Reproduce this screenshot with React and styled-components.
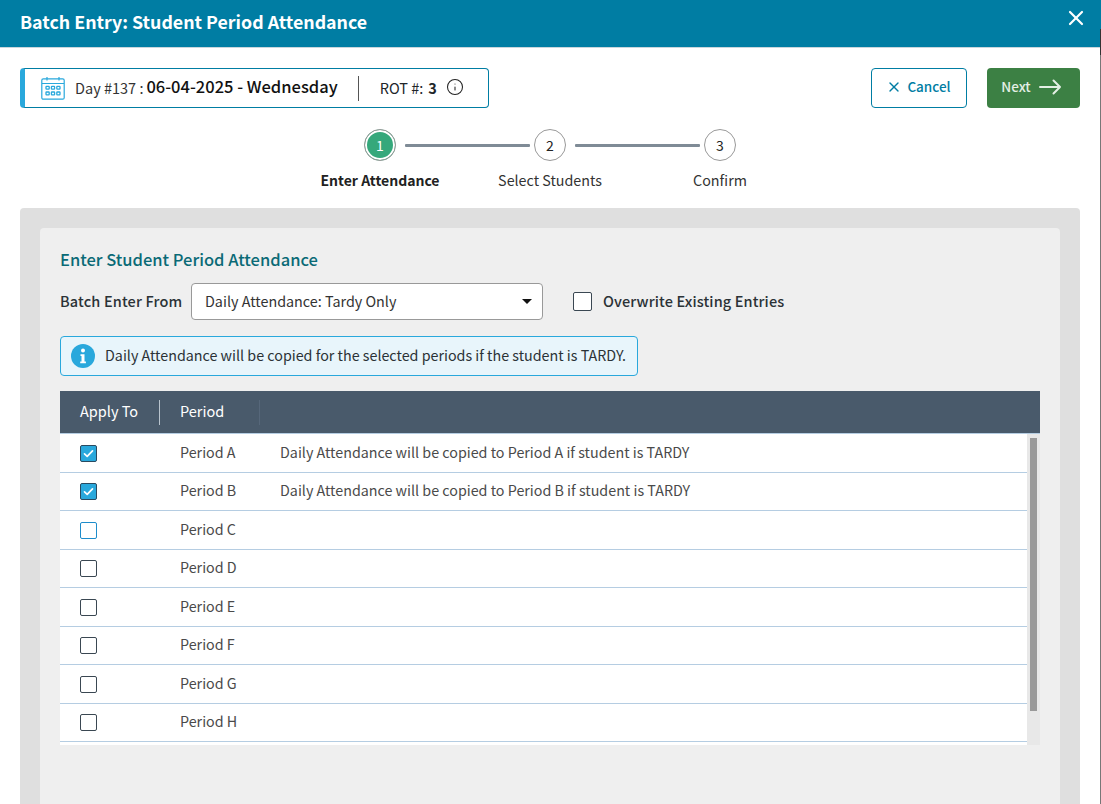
import React from 'react';
import styled, { createGlobalStyle } from 'styled-components';
import { X, Info } from 'lucide-react';

const GlobalStyle = createGlobalStyle`
  html, body {
    margin: 0;
    padding: 0;
    height: 100%;
    overflow: hidden;
    background: #fff;
    font-family: "Noto Sans CJK SC", "Noto Sans", sans-serif;
    color: #212529;
  }
  * { box-sizing: border-box; }
`;

const Modal = styled.div`
  position: relative;
  height: 804px;
  overflow: hidden;
`;

const EdgeLine = styled.div`
  position: absolute;
  top: 29px;
  right: 0;
  bottom: 0;
  width: 1px;
  background: linear-gradient(#333 0, #333 26px, #777 26px);
`;

const Header = styled.header`
  height: 48px;
  background: #007da3;
  border-bottom: 1px solid #c9d6dc;
  padding: 0 13px 3px 20px;
  display: flex;
  align-items: center;
  justify-content: space-between;
`;

const Title = styled.h1`
  margin: 0;
  padding-bottom: 2px;
  font-size: 17.8px;
  font-weight: 700;
  color: #fff;
`;

const CloseButton = styled.button`
  border: 0;
  padding: 0;
  background: none;
  color: #fff;
  display: flex;
  margin-bottom: 9px;
`;

const Body = styled.main`
  padding: 20px 21px 0 20px;
`;

const TopRow = styled.div`
  display: flex;
  align-items: center;
  justify-content: space-between;
`;

const DayBox = styled.div`
  width: 469px;
  height: 40px;
  border: 1px solid #007da3;
  border-left: 5px solid #29a8dc;
  border-radius: 4px;
  padding: 0 0 2px 16px;
  display: flex;
  align-items: center;
  font-size: 14.5px;
`;

const CalendarSvg = styled.svg`
  margin-top: 2px;
`;

const DayLabel = styled.span`
  margin-left: 10px;
  color: #333;
`;

const DayValue = styled.span`
  margin: 0 0 2px 3px;
  font-size: 16.5px;
  font-weight: 500;
  color: #111;
`;

const DayDivider = styled.span`
  width: 1px;
  height: 25px;
  background: #555;
  margin: 2px 21px 0 20px;
`;

const RotValue = styled.b`
  margin: 0 9px 0 5px;
  font-weight: 700;
`;

const Actions = styled.div`
  display: flex;
  gap: 20px;
`;

const CancelButton = styled.button`
  width: 96px;
  height: 40px;
  border: 1px solid #007da3;
  border-radius: 4px;
  background: #fff;
  color: #007da3;
  padding: 0 1px 2px 0;
  font: 500 13.5px "Noto Sans CJK SC", sans-serif;
  display: flex;
  align-items: center;
  justify-content: center;
  gap: 5px;
`;

const NextButton = styled.button`
  width: 93px;
  height: 40px;
  border: 0;
  border-radius: 4px;
  background: #3c8044;
  color: #e4efe5;
  padding: 0 4px 2px 0;
  font: 500 13.5px "Noto Sans CJK SC", sans-serif;
  display: flex;
  align-items: center;
  justify-content: center;
  gap: 8px;
`;

const ButtonLabel = styled.span`
  padding-bottom: 2px;
`;

const Stepper = styled.ol`
  list-style: none;
  margin: 21px 0 0;
  padding: 0 0 0 275px;
  display: flex;
`;

const Step = styled.li`
  width: 170px;
  display: flex;
  flex-direction: column;
  align-items: center;
  position: relative;
`;

const StepCircle = styled.span`
  width: 32px;
  height: 32px;
  border-radius: 50%;
  border: 1px solid #999;
  background: ${p => (p.$active ? '#35a87b' : '#fff')};
  box-shadow: ${p => (p.$active ? 'inset 0 0 0 2px #fff' : 'none')};
  color: ${p => (p.$active ? '#fff' : '#222')};
  font-size: 14px;
  display: flex;
  align-items: center;
  justify-content: center;
`;

const StepLine = styled.span`
  position: absolute;
  left: 110px;
  top: 15px;
  width: 125px;
  height: 3px;
  background: #7f8b96;
  border-radius: 1px;
`;

const StepLabel = styled.span`
  margin-top: 9px;
  font-size: ${p => (p.$active ? '14px' : '14.3px')};
  line-height: 20px;
  font-weight: ${p => (p.$active ? 700 : 400)};
  color: ${p => (p.$active ? '#222' : '#333')};
`;

const OuterPanel = styled.section`
  margin-top: 18px;
  height: 620px;
  background: #dfdfdf;
  border-radius: 4px 4px 0 0;
  padding: 20px;
`;

const InnerPanel = styled.div`
  height: 600px;
  background: #efefef;
  border-radius: 4px 4px 0 0;
  padding: 19px 20px 20px;
`;

const SectionTitle = styled.h2`
  margin: 0;
  font-size: 16.5px;
  line-height: 24px;
  font-weight: 500;
  color: #0a6a76;
`;

const FormRow = styled.div`
  margin-top: 12px;
  display: flex;
  align-items: center;
`;

const FieldLabel = styled.label`
  width: ${p => (p.$auto ? 'auto' : '131px')};
  padding-bottom: 2px;
  font-size: 14.5px;
  font-weight: 500;
  letter-spacing: ${p => (p.$auto ? '0.12px' : '0.15px')};
  color: #2b3236;
`;

const Select = styled.div`
  width: 352px;
  height: 37px;
  border: 1px solid #999;
  border-radius: 4px;
  background: #fff;
  padding: 0 14px 2px 13px;
  font-size: 14.35px;
  color: #333;
  display: flex;
  align-items: center;
  justify-content: space-between;
`;

const Caret = styled.span`
  width: 0;
  height: 0;
  margin: 2px -4px 0 0;
  border: 5px solid transparent;
  border-top: 5px solid #111;
  border-bottom: 0;
`;

const BigCheck = styled.span`
  width: 19px;
  height: 19px;
  margin: 0 11px 0 30px;
  border: 1px solid #3a4752;
  border-radius: 2px;
  background: #fff;
`;

const Notice = styled.div`
  margin-top: 16px;
  width: 578px;
  height: 40px;
  border: 1px solid #29a8dc;
  border-radius: 4px;
  background: #e8f5fb;
  padding-left: 10px;
  display: flex;
  align-items: center;
  gap: 10px;
  font-size: 14.3px;
  color: #2b3236;
`;

const NoticeText = styled.span`
  padding-bottom: 3px;
`;

const Table = styled.div`
  margin-top: 15px;
  width: 980px;
`;

const HeadRow = styled.div`
  height: 43px;
  background: #495a6b;
  border-bottom: 1px solid #b5cde2;
  display: flex;
  align-items: center;
  color: #fff;
  font-size: 14.5px;
`;

const HeadCell = styled.span`
  width: 100px;
  height: 25px;
  padding-left: 20px;
  line-height: 22px;
  border-right: 1px solid ${p => (p.$faint ? '#56677a' : '#b9c4ce')};
`;

const TableBody = styled.div`
  height: 311px;
  display: flex;
  overflow: hidden;
`;

const Rows = styled.div`
  flex: 1;
  background: #fff;
`;

const Row = styled.div`
  height: 38.5px;
  border-bottom: 1px solid #b5cde2;
  display: flex;
  align-items: center;
  font-size: 14.3px;
  color: #4a4a4a;
`;

const CheckCell = styled.span`
  width: 120px;
  padding: 1px 0 0 20px;
  display: flex;
`;

const CheckBox = styled.span`
  width: 17px;
  height: 17px;
  border-radius: 2px;
  border: 1px solid ${p => (p.$checked ? '#2a4a60' : p.$focus ? '#1d8ccb' : '#3a4752')};
  background: ${p => (p.$checked ? '#29a8dc' : '#fff')};
  display: flex;
  align-items: center;
  justify-content: center;
`;

const PeriodCell = styled.span`
  width: 100px;
  padding-bottom: 3px;
`;

const NoteCell = styled.span`
  padding-bottom: 3px;
`;

const Scrollbar = styled.div`
  width: 13px;
  background: #e8e8e8;
  padding: 4px 3px 0;
`;

const ScrollThumb = styled.div`
  height: 273px;
  background: #999;
`;

const CalendarIcon = () => (
  <CalendarSvg width="24" height="24" viewBox="0 0 24 24" fill="none" stroke="#29a8dc" strokeWidth="1.2">
    <rect x="0.8" y="2.8" width="22.4" height="20.4" rx="1.5" />
    <path d="M1 7.5h22M6 1v3.5M18 1v3.5" />
    <g strokeWidth="1.3">
      <rect x="5" y="10.3" width="3.2" height="2.8" rx=".6" />
      <rect x="10.4" y="10.3" width="3.2" height="2.8" rx=".6" />
      <rect x="15.8" y="10.3" width="3.2" height="2.8" rx=".6" />
      <rect x="5" y="16" width="3.2" height="2.8" rx=".6" />
      <rect x="10.4" y="16" width="3.2" height="2.8" rx=".6" />
      <rect x="15.8" y="16" width="3.2" height="2.8" rx=".6" />
    </g>
  </CalendarSvg>
);

const ArrowIcon = () => (
  <svg width="23" height="16" viewBox="0 0 23 16" fill="none" stroke="currentColor" strokeWidth="2" strokeLinecap="round" strokeLinejoin="round">
    <path d="M1 8h20M14.5 1.5 21 8l-6.5 6.5" />
  </svg>
);

const InfoDot = () => (
  <svg width="24" height="24" viewBox="0 0 24 24">
    <circle cx="12" cy="12" r="12" fill="#29a8dc" />
    <circle cx="12" cy="6.5" r="2" fill="#fff" />
    <path d="M9.5 10.2h4v7.3h1.4v1.7H9.2v-1.7h1.3v-5.6h-1z" fill="#fff" />
  </svg>
);

const Tick = () => (
  <svg width="11" height="9" viewBox="0 0 11 9" fill="none" stroke="#fff" strokeWidth="1.7" strokeLinecap="round" strokeLinejoin="round">
    <path d="M1.5 4.8 4.2 7.3 9.5 1.8" />
  </svg>
);

const steps = ['Enter Attendance', 'Select Students', 'Confirm'];

const periods = [
  { name: 'A', checked: true },
  { name: 'B', checked: true },
  { name: 'C', focus: true },
  { name: 'D' },
  { name: 'E' },
  { name: 'F' },
  { name: 'G' },
  { name: 'H' },
];

const App = () => {
  return (
    <Modal>
      <GlobalStyle />
      <Header>
        <Title>Batch Entry: Student Period Attendance</Title>
        <CloseButton aria-label="Close"><X size={24} strokeWidth={2.2} /></CloseButton>
      </Header>
      <Body>
        <TopRow>
          <DayBox>
            <CalendarIcon />
            <DayLabel>Day #137 :</DayLabel>
            <DayValue>06-04-2025 - Wednesday</DayValue>
            <DayDivider />
            ROT #:
            <RotValue>3</RotValue>
            <Info size={18} strokeWidth={1.4} color="#222" />
          </DayBox>
          <Actions>
            <CancelButton><X size={16} strokeWidth={2} /><ButtonLabel>Cancel</ButtonLabel></CancelButton>
            <NextButton><ButtonLabel>Next</ButtonLabel><ArrowIcon /></NextButton>
          </Actions>
        </TopRow>
        <Stepper>
          {steps.map((label, i) => (
            <Step key={label}>
              <StepCircle $active={i === 0}>{i + 1}</StepCircle>
              {i < 2 && <StepLine />}
              <StepLabel $active={i === 0}>{label}</StepLabel>
            </Step>
          ))}
        </Stepper>
        <OuterPanel>
          <InnerPanel>
            <SectionTitle>Enter Student Period Attendance</SectionTitle>
            <FormRow>
              <FieldLabel>Batch Enter From</FieldLabel>
              <Select>Daily Attendance: Tardy Only<Caret /></Select>
              <BigCheck />
              <FieldLabel as="span" $auto>Overwrite Existing Entries</FieldLabel>
            </FormRow>
            <Notice>
              <InfoDot />
              <NoticeText>Daily Attendance will be copied for the selected periods if the student is TARDY.</NoticeText>
            </Notice>
            <Table>
              <HeadRow>
                <HeadCell>Apply To</HeadCell>
                <HeadCell $faint>Period</HeadCell>
              </HeadRow>
              <TableBody>
                <Rows>
                  {periods.map(p => (
                    <Row key={p.name}>
                      <CheckCell>
                        <CheckBox $checked={p.checked} $focus={p.focus}>{p.checked && <Tick />}</CheckBox>
                      </CheckCell>
                      <PeriodCell>Period {p.name}</PeriodCell>
                      {p.checked && <NoteCell>Daily Attendance will be copied to Period {p.name} if student is TARDY</NoteCell>}
                    </Row>
                  ))}
                </Rows>
                <Scrollbar><ScrollThumb /></Scrollbar>
              </TableBody>
            </Table>
          </InnerPanel>
        </OuterPanel>
      </Body>
      <EdgeLine />
    </Modal>
  );
};

export default App;
